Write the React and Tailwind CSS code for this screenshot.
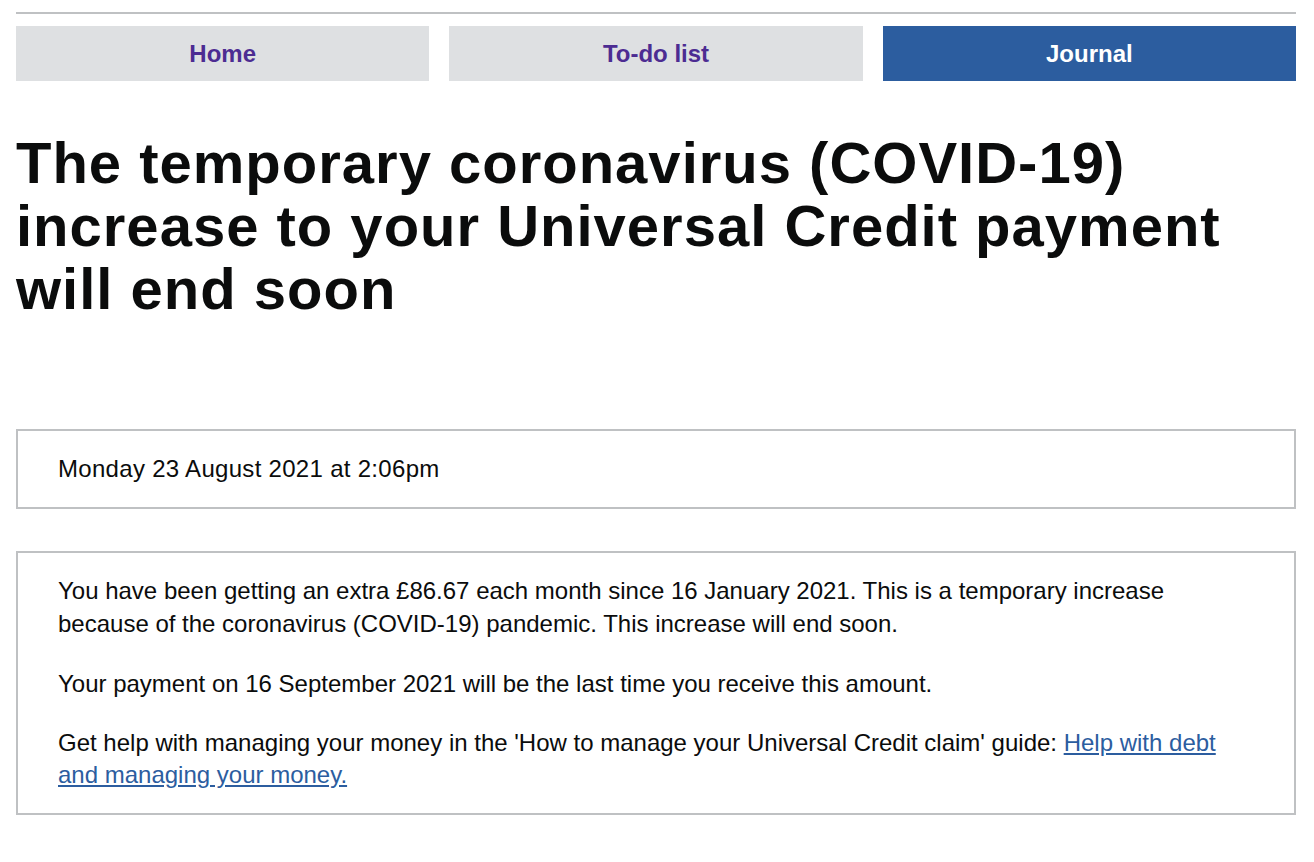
const tabs = [
  { label: 'Home', active: false },
  { label: 'To-do list', active: false },
  { label: 'Journal', active: true },
]

export default function App() {
  return (
    <div className="min-h-screen bg-white pl-4 pr-[18px] pt-3 text-[#0b0c0c] font-['Liberation_Sans',Arial,sans-serif]">
      {/* Navegação */}
      <div className="border-t-2 border-[#bfc1c3] pt-3">
        <nav className="grid grid-cols-3 gap-5">
          {tabs.map((t) => (
            <a
              key={t.label}
              href="#"
              className={
                t.active
                  ? 'flex h-[55px] items-center justify-center bg-[#2c5d9f] text-[24px] font-bold text-white'
                  : 'flex h-[55px] items-center justify-center bg-[#dee0e2] text-[24px] font-bold text-[#4c2c92]'
              }
            >
              {t.label}
            </a>
          ))}
        </nav>
      </div>

      <h1 className="mt-[50px] text-[58px] font-bold leading-[63px] tracking-[1px]">
        The temporary coronavirus (COVID-19) increase to your Universal Credit payment will end soon
      </h1>

      <div className="mt-[109px] border-2 border-[#bfc1c3] px-10 py-[22px] text-[24px] leading-8 tracking-[0.3px]">
        Monday 23 August 2021 at 2:06pm
      </div>

      <div className="mt-[42px] border-2 border-[#bfc1c3] pb-[21px] pl-10 pr-[50px] pt-[22px] text-[24px] leading-[32.5px]">
        <p className="mb-[28px]">
          You have been getting an extra £86.67 each month since 16 January 2021. This is a temporary increase
          because of the coronavirus (COVID-19) pandemic. This increase will end soon.
        </p>
        <p className="mb-[26px]">Your payment on 16 September 2021 will be the last time you receive this amount.</p>
        <p>
          Get help with managing your money in the 'How to manage your Universal Credit claim' guide:{' '}
          <a href="#" className="text-[#2c5d9f] underline underline-offset-2">
            Help with debt and managing your money.
          </a>
        </p>
      </div>
    </div>
  )
}
